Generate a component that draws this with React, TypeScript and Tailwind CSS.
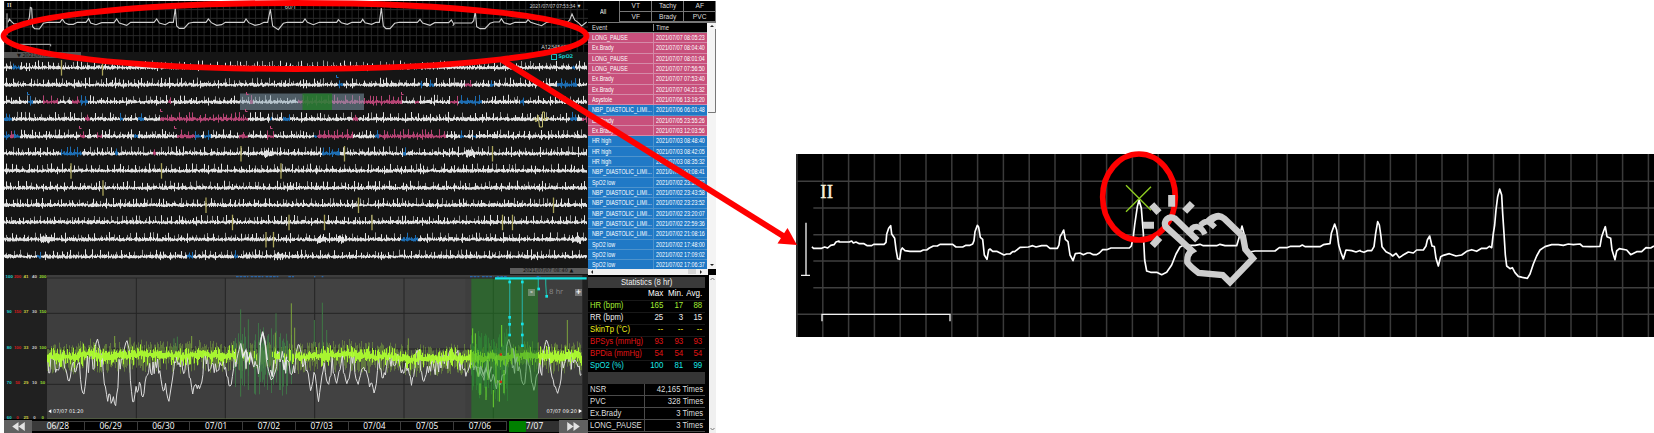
import React from "react";

type Seg = [number, number, string];

const PINK = "#c94a80";
const BLUE = "#1f78c4";
const WHITE = "#f2f2f2";

function makeRandom(seed: number) {
  let s = seed;
  return () => {
    s = (s * 1664525 + 1013904223) % 4294967296;
    return s / 4294967296;
  };
}

const STRIPS: { segs: Seg[]; marks: number[]; bursts?: number[] }[] = [
  { segs: [[12, 20, BLUE], [572, 575, BLUE]], marks: [61.5, 102.5] },
  { segs: [[338, 343, BLUE], [420, 423, BLUE], [429, 434, BLUE], [465, 472, PINK], [490, 494, BLUE], [557, 577, BLUE]], marks: [] },
  { segs: [[28, 33, BLUE], [43, 58, PINK], [72, 80, PINK], [80, 88, BLUE], [168, 171, PINK], [250, 253, PINK], [298, 402, PINK], [415, 419, PINK], [450, 458, PINK], [459, 482, BLUE], [520, 524, BLUE]], marks: [] },
  { segs: [[4, 12, BLUE], [85, 90, PINK], [120, 123, BLUE], [138, 144, BLUE], [160, 248, PINK], [270, 272, BLUE], [283, 290, BLUE], [353, 358, PINK], [570, 577, BLUE], [582, 588, PINK]], marks: [] },
  { segs: [[4, 10, BLUE], [10, 14, PINK], [14, 20, BLUE], [80, 85, PINK], [97, 102, PINK], [134, 138, BLUE], [177, 195, PINK], [195, 201, BLUE], [204, 211, BLUE], [239, 248, PINK], [267, 274, PINK], [314, 317, BLUE], [317, 353, PINK], [375, 379, BLUE], [379, 446, PINK], [460, 464, BLUE], [473, 476, BLUE]], marks: [] },
  { segs: [[61, 82, BLUE], [115, 118, BLUE], [153, 156, PINK], [322, 340, BLUE], [403, 406, BLUE]], marks: [241, 344.5, 492.5], bursts: [268, 470] },
  { segs: [], marks: [71, 161.5, 281] },
  { segs: [], marks: [103] },
  { segs: [], marks: [206, 358.5, 553.5] },
  { segs: [], marks: [232.5, 289, 324.5, 372, 502.5, 512.5] },
  { segs: [[401, 418, BLUE]], marks: [266, 273.5], bursts: [45, 321, 342, 576] },
  { segs: [[37, 41, BLUE], [187, 193, BLUE], [234, 238, BLUE]], marks: [], bursts: [278] },
];

const L_MARKS: [number, number, string][] = [
  [27, 95, BLUE], [246, 95, PINK], [160, 112, PINK], [245, 112, PINK],
  [79, 129, PINK], [174, 129, PINK], [270, 129, PINK], [336, 78, BLUE], [401, 95, PINK],
];

function StripWave({ index }: { index: number }) {
  const { segs, marks, bursts = [] } = STRIPS[index];
  const base = 67.6 + index * 17.18;
  const rnd = makeRandom(index * 97 + 11);
  const groups: Record<string, string> = {};
  const dim: string[] = [];
  let untilBeat = 3;
  for (let x = 4; x < 587; x += 1) {
    const seg = segs.find(([a, b]) => x >= a && x < b);
    const color = seg ? seg[2] : WHITE;
    let up = 0.5 + rnd() * 1.9;
    let down = 0.6 + rnd() * 1.5;
    if (bursts.some((b) => Math.abs(b - x) < 5)) {
      up += rnd() * 2.5;
      down += rnd() * 3;
    }
    untilBeat -= 1;
    if (untilBeat <= 0) {
      const h = 3.8 + rnd() * 3.5;
      if (color === WHITE && rnd() < 0.45) {
        dim.push(`M${x + 0.5} ${(base - h).toFixed(1)}V${base.toFixed(1)}`);
      } else {
        up = h;
        down = rnd() < 0.2 ? 3.5 : 2;
      }
      untilBeat = 3 + Math.floor(rnd() * 6);
    }
    groups[color] = (groups[color] || "") + `M${x + 0.5} ${(base - up).toFixed(1)}V${(base + down).toFixed(1)}`;
  }
  return (
    <g fill="none">
      <path d={dim.join("")} stroke="#949494" />
      {Object.entries(groups).map(([c, d]) => (
        <path key={c} d={d} stroke={c} strokeOpacity={c === WHITE ? 0.92 : 0.9} />
      ))}
      {marks.map((m) => (
        <path key={m} d={`M${m} ${base - 7.5}V${base + 8}`} stroke="#aaa45a" strokeWidth="1.3" />
      ))}
    </g>
  );
}

function LeadStrip() {
  const vertical: number[] = [];
  for (let x = 14; x < 1760; x += 19.3) vertical.push(x);
  return (
    <svg className="absolute inset-0 h-full w-full" viewBox="12 3 1752 153" preserveAspectRatio="none" fill="none">
      <path d={vertical.map((x) => `M${x} 3V156`).join("")} stroke="#242424" strokeWidth="3" />
      <path d="M12 29H1764M12 55H1764M12 81H1764M12 107H1764M12 133H1764" stroke="#2b2b2b" strokeWidth="3" />
      <path d="M21 40V105M60 133H152V139" stroke="#bbb" strokeWidth="3" />
      <path
        d="M24 67L28 57L34 64L42 72L60 70L84 66L88 52L91 22L95 24L98 80L104 86L118 87L130 70L145 67H180L187 57L194 68L205 73H220L232 67H258L266 56L272 69L288 74L305 68H342L350 57L358 69L380 76L392 67H462L470 57L478 69L496 74L508 67H520L526 24L530 78L538 85H552L566 70L580 67H618L625 57L634 68L650 76L665 74L676 67H732L738 57L746 68L765 76L780 73L792 67H803L811 28L818 78L835 89L850 70L862 67H908L915 57L922 67L940 74L958 67H1010L1015 59L1024 68L1042 73L1056 67H1082L1088 58L1095 68L1115 73L1128 67H1138L1144 24L1150 78L1158 86H1170L1184 70L1198 67H1252L1260 58L1268 69L1290 76L1304 68H1346L1354 60L1362 73L1358 77M1362 69H1415L1421 62L1426 34L1430 80L1440 86H1455L1470 70L1482 66H1498L1504 56L1512 68L1530 73L1545 67H1578L1584 59L1592 67L1608 72L1625 77L1640 67H1702L1709 60L1716 42L1724 60L1735 68L1745 78L1760 66"
        stroke="#cfcfcf"
        strokeWidth="3.3"
      />
    </svg>
  );
}

function buildTrend() {
  const rnd = makeRandom(4242);
  const dips = [205, 250, 322, 335, 345, 400, 412, 428, 492, 505, 512, 578, 590, 600, 690, 815, 900, 932, 955, 985, 1010, 1040, 1075, 1110, 1122, 1150, 1235, 1270, 1400, 1450, 1475, 1490, 1500, 1570, 1602, 1665, 1674, 1745];
  const depth = [60, 105, 120, 135, 145, 135, 90, 120, 95, 125, 80, 90, 85, 90, 80, 60, 50, 80, 115, 70, 60, 70, 75, 85, 95, 50, 65, 60, 40, 60, 60, 80, 70, 75, 90, 75, 105, 40];
  const lime: string[] = [];
  const fade: string[] = [];
  const dark: string[] = [];
  const white: string[] = [];
  let drift = 0;
  for (let x = 142.5; x < 1746; x += 3) {
    drift = drift * 0.9 + (rnd() - 0.5) * 5;
    const center = 288 + drift + (x > 1180 && x < 1560 ? 6 : 0);
    const wild = x > 702 && x < 885;
    const active = x > 1412 && x < 1525;
    if (!wild || rnd() < 0.3) {
      const reach = () => 5 + rnd() * rnd() * 30;
      lime.push(`M${x} ${(center - reach()).toFixed(0)}V${(center + reach()).toFixed(0)}`);
    }
    fade.push(`M${x} ${(center - 8 - rnd() * 36).toFixed(0)}V${(center + 8 + rnd() * 44).toFixed(0)}`);
    if (wild && rnd() < 0.65) {
      dark.push(`M${x} ${(250 - rnd() * 75 * (rnd() < 0.3 ? 1.1 : 0.4)).toFixed(0)}V${(325 + rnd() * 85).toFixed(0)}`);
    }
    if (active && rnd() < 0.7) {
      dark.push(`M${x} ${(265 - rnd() * 60).toFixed(0)}V${(340 + rnd() * 60 + (x > 1430 ? 25 : 0)).toFixed(0)}`);
    }
  }
  for (let x = 143; x < 1746; x += 3.4) {
    let y = 308 + Math.sin(x / 17) * 8 + (rnd() - 0.5) * 66;
    dips.forEach((d, i) => {
      const dist = Math.abs(x - d);
      if (dist < 11) y = Math.max(y, 305 + depth[i] * (1 - dist / 17) + (rnd() - 0.5) * 22);
    });
    [[292, 235], [380, 238], [788, 215], [722, 250], [896, 248], [1526, 235], [1640, 236]].forEach(([p, top]) => {
      if (Math.abs(x - p) < 9) y = top + Math.abs(x - p) * 4;
    });
    white.push(`${x.toFixed(1)},${y.toFixed(0)}`);
  }
  return { lime: lime.join(""), fade: fade.join(""), dark: dark.join(""), white: white.join(" ") };
}

const TREND = buildTrend();

function TrendChart() {
  return (
    <svg className="h-[144px] w-[541px] shrink-0" viewBox="141 45 1623 432" preserveAspectRatio="none" fill="none">
      <rect x="141" y="45" width="1606" height="432" fill="#3e3e3e" />
      <rect x="676" y="56" width="720" height="421" fill="#424242" />
      <path d="M141 54H1747M141 160H1747M141 267H1747M141 373H1747M409 54V478M676 54V478M944 54V478M1212 54V478M1480 54V478" stroke="#252525" strokeWidth="3" />
      <path d="M708 50H745M752 50H790M797 50H835M865 50H882M942 50H946M965 50H970M1410 50H1438M1446 50H1480M1490 50H1520M1610 50H1622" stroke="#2b66a8" strokeWidth="4" strokeDasharray="8 3" />
      <path d={TREND.fade} stroke="#86b83d" strokeWidth="2" strokeOpacity="0.7" />
      <path d={TREND.dark} stroke="#3f8549" strokeWidth="2.5" strokeOpacity="0.85" />
      <polyline points={TREND.white} stroke="#dedede" strokeWidth="3" />
      <path d={TREND.lime} stroke="#adff2f" strokeWidth="3" strokeOpacity="0.93" />
      <path d="M967 128V280M943 180V260M722 148V410M828 160V260M745 178V390M980 210V260M522 235V270M532 230V270" stroke="#3f7a45" strokeWidth="3" />
      <path d="M874 130V270M826 218V270M884 203V270M1702 180V270M344 228V262M575 228V264M390 232V266M1225 235V270" stroke="#8ab83c" strokeWidth="2.5" />
      <path d="M722 250L728 290L738 270L744 300L752 280L758 310M780 255L788 215L796 255L802 300M812 330L817 350L822 300M848 300L852 330L860 290M1428 320L1436 350L1442 318L1450 345L1458 325L1466 350L1474 320M1540 265L1546 310L1552 290" stroke="#e8e8e8" strokeWidth="4" />
      <rect x="1414" y="56" width="200" height="421" fill="#1f8a22" fillOpacity="0.5" />
      <path d="M1418 205V250M1426 220V300M1505 195V260M1440 370V405M1458 380V420M1480 390V442M1498 360V425M1512 330V400M1434 270V350M1464 275V360M1488 280V370" stroke="#6dd52f" strokeWidth="3" />
      <path d="M1529 56V225M1567 56V257M1615 56V87M1637 56V72L1640 109" stroke="#27a08c" strokeWidth="4" />
      <path d="M1485 55H1760" stroke="#14e6e6" strokeWidth="7" />
      {[[1529, 66], [1529, 172], [1529, 193], [1529, 225], [1567, 66], [1567, 192], [1567, 225], [1567, 257], [1616, 87], [1640, 109]].map(([x, y]) => (
        <rect key={`${x}-${y}`} x={x - 4} y={y - 4} width="8" height="8" fill="#14e6e6" />
      ))}
      <rect x="1499" y="280" width="7" height="7" fill="#d32b12" />
      <rect x="1499" y="362" width="7" height="7" fill="#d32b12" />
      <path d="M142 477H1747" stroke="#5e7442" strokeWidth="3" />
      <path d="M154 448V460L145 454ZM1736 447V460L1746 453Z" fill="#fff" />
    </svg>
  );
}

const AXIS = [
  ["100", "200", "41", "40", "200"],
  ["90", "150", "37", "30", "150"],
  ["80", "100", "33", "20", "100"],
  ["70", "50", "29", "10", "50"],
  ["60", "0", "25", "0", "0"],
];
const AXIS_COLORS = ["text-[#1fd0d0]", "text-[#d01c1c]", "text-[#cfcf40]", "text-[#c8c8c8]", "text-[#93d62f]"];

const D7 = "2021/07/07 ";
const NBP = "NBP_DIASTOLIC_LIMI...";
const EVENTS: [string, string, boolean][] = [
  ["LONG_PAUSE", D7 + "08:05:23", true],
  ["Ex.Brady", D7 + "08:04:40", true],
  ["LONG_PAUSE", D7 + "08:01:04", true],
  ["LONG_PAUSE", D7 + "07:56:50", true],
  ["Ex.Brady", D7 + "07:53:40", true],
  ["Ex.Brady", D7 + "04:21:32", true],
  ["Asystole", "2021/07/06 13:19:20", true],
  [NBP, "2021/07/06 06:01:48", false],
  ["Ex.Brady", "2021/07/05 23:55:26", true],
  ["Ex.Brady", "2021/07/03 12:03:56", true],
  ["HR high", "2021/07/03 08:48:40", false],
  ["HR high", "2021/07/03 08:42:05", false],
  ["HR high", "2021/07/03 08:35:32", false],
  [NBP, "2021/07/03 00:08:41", false],
  ["SpO2 low", "2021/07/02 23:53:32", false],
  [NBP, "2021/07/02 23:43:58", false],
  [NBP, "2021/07/02 23:23:52", false],
  [NBP, "2021/07/02 23:20:07", false],
  [NBP, "2021/07/02 22:59:36", false],
  [NBP, "2021/07/02 21:08:16", false],
  ["SpO2 low", "2021/07/02 17:48:00", false],
  ["SpO2 low", "2021/07/02 17:09:02", false],
  ["SpO2 low", "2021/07/02 17:06:37", false],
];

const STATS: [string, string, string, string, string][] = [
  ["HR (bpm)", "165", "17", "88", "text-[#a4ee33]"],
  ["RR (bpm)", "25", "3", "15", "text-[#efefef]"],
  ["SkinTp (°C)", "--", "--", "--", "text-[#f0f01a]"],
  ["BPSys (mmHg)", "93", "93", "93", "text-[#e01414]"],
  ["BPDia (mmHg)", "54", "54", "54", "text-[#e01414]"],
  ["SpO2 (%)", "100", "81", "99", "text-[#19e8e8]"],
];

const COUNTS: [string, string][] = [
  ["NSR", "42,165 Times"],
  ["PVC", "328 Times"],
  ["Ex.Brady", "3 Times"],
  ["LONG_PAUSE", "3 Times"],
];

const DAYS = ["06/28", "06/29", "06/30", "07/01", "07/02", "07/03", "07/04", "07/05", "07/06"];

function EventPanel() {
  return (
    <div className="flex h-[274px] flex-col bg-black text-[7.4px] leading-none text-white">
      <div className="flex h-[22px] shrink-0 border-b border-[#777]">
        <div className="flex w-[32px] items-center justify-center border-r border-[#777]">
          <span className="scale-x-75">All</span>
        </div>
        <div className="grid w-[97px] grid-cols-3 grid-rows-2">
          {["VT", "Tachy", "AF", "VF", "Brady", "PVC"].map((t) => (
            <div key={t} className="flex h-[10.5px] items-center justify-center overflow-hidden border-r border-b border-[#777] text-[#ddd]">
              <span className="scale-x-90">{t}</span>
            </div>
          ))}
        </div>
      </div>
      <div className="flex min-h-0 flex-1">
        <div className="flex w-[119px] flex-col overflow-hidden">
          <div className="flex h-[10px] shrink-0 items-center border-b border-[#888] text-[#ddd]">
            <div className="w-[66px] border-r border-[#888] pl-[4px]"><span className="inline-block origin-left scale-x-[.8]">Event</span></div>
            <div className="pl-[2px]"><span className="inline-block origin-left scale-x-[.8]">Time</span></div>
          </div>
          {EVENTS.map(([name, time, alarm], i) => (
            <div key={i} className={`flex h-[10.33px] shrink-0 items-center border-b ${alarm ? "border-[#d58aa8] bg-[#c8507c]" : "border-[#4d93cd] bg-[#2079c6]"}`}>
              <div className={`flex h-full w-[66px] shrink-0 items-center border-r pl-[4px] ${alarm ? "border-[#d58aa8]" : "border-[#4d93cd]"}`}>
                <span className="inline-block origin-left scale-x-[.72] whitespace-nowrap text-white">{name}</span>
              </div>
              <div className="w-[53px] pl-[2px]"><span className="inline-block origin-left scale-x-[.72] whitespace-nowrap text-white">{time}</span></div>
            </div>
          ))}
        </div>
        <div className="flex w-[9px] flex-col justify-between bg-[#f4f4f4]">
          <svg viewBox="0 0 9 90" className="h-[90px] w-[9px]"><path d="M3 4H7L5 2Z" fill="#222" /><path d="M1 89.5H8.5V6" stroke="#777" fill="none" /></svg>
          <svg viewBox="0 0 9 8" className="h-[8px] w-[9px]"><path d="M3 3H7L5 5Z" fill="#222" /></svg>
        </div>
      </div>
      <div className="flex h-[6px] w-[120px] shrink-0 items-center justify-between bg-[#f0f0f0] px-[2px]">
        <svg viewBox="0 0 4 4" className="size-[4px]"><path d="M3 0V4L1 2Z" fill="#222" /></svg>
        <svg viewBox="0 0 24 6" className="h-[6px] w-[24px]"><path d="M6 0H14V5H6Z" fill="#d5d5d5" /><path d="M18 1V5L20 3Z" fill="#222" /></svg>
      </div>
    </div>
  );
}

function StatsPanel() {
  return (
    <div className="flex h-[158px] bg-black text-[9.2px] leading-none text-[#dedede]">
      <div className="flex w-[117px] flex-col pt-[2px]">
        <div className="flex h-[11px] shrink-0 items-center justify-center bg-[#3a3a3a] text-[#f0f0f0]"><span className="scale-x-[.84] whitespace-nowrap">Statistics (8 hr)</span></div>
        <div className="flex h-[11.5px] shrink-0 items-center justify-end text-white">
          {["Max", "Min.", "Avg."].map((t) => (
            <div key={t} className="flex w-[19.5px] justify-end pr-[2.5px]"><span className="origin-right scale-x-[.88]">{t}</span></div>
          ))}
        </div>
        {STATS.map(([label, a, b, c, color]) => (
          <div key={label} className={`flex h-[12px] shrink-0 items-center border-t border-[#181818] ${color}`}>
            <div className="w-[58.5px] pl-[2px]"><span className="inline-block origin-left scale-x-[.84] whitespace-nowrap">{label}</span></div>
            {[a, b, c].map((v, i) => (
              <div key={i} className="flex w-[19.5px] justify-end pr-[2.5px]"><span className="origin-right scale-x-[.86]">{v}</span></div>
            ))}
          </div>
        ))}
        <div className="h-[12.5px] shrink-0 bg-[#353535]" />
        {COUNTS.map(([label, value]) => (
          <div key={label} className="flex h-[12px] shrink-0 items-center border-b border-[#4a4a4a]">
            <div className="flex h-full w-[57px] items-center border-r border-[#4a4a4a] pl-[2px]"><span className="origin-left scale-x-[.84] whitespace-nowrap">{label}</span></div>
            <div className="flex w-[60px] justify-end pr-[2px]"><span className="origin-right scale-x-[.84] whitespace-nowrap">{value}</span></div>
          </div>
        ))}
      </div>
      <div className="flex w-[11px] flex-col pl-[4px]">
        <div className="flex h-full w-[7px] flex-col justify-between bg-[#f0f0f0]">
          <svg viewBox="0 0 7 8" className="h-[8px] w-[7px]"><path d="M1.5 5L3.5 3L5.5 5" stroke="#777" fill="none" /></svg>
          <svg viewBox="0 0 7 8" className="h-[8px] w-[7px]"><path d="M1.5 3L3.5 5L5.5 3" stroke="#777" fill="none" /></svg>
        </div>
      </div>
    </div>
  );
}

function Monitor() {
  return (
    <div className="mt-px ml-[4px] flex h-[432px] w-[712px] overflow-hidden bg-[#151515] font-['Liberation_Sans',Arial,sans-serif]">
      <div className="flex w-[584px] flex-col">
        <div className="relative flex h-[51px] shrink-0 flex-col justify-between bg-black font-['Noto_Sans',sans-serif] text-[5.5px] leading-none text-[#d8d8d8]">
          <LeadStrip />
          <div className="relative flex justify-between pt-[2px] pr-[7px] pl-[3px]">
            <span className="font-['Liberation_Serif',serif] font-bold">II</span>
            <span className="pt-[2px] pl-[46px]">60/1</span>
            <span className="origin-right scale-x-90 pt-px tracking-[-0.1px]">2021/07/07 07:53:34 ▼</span>
          </div>
          <div className="relative pr-[15px] pb-[2px] text-right">A123456789</div>
        </div>
        <div className="relative h-[223px] shrink-0 text-[5.5px] leading-none">
          <svg className="absolute inset-0" width="584" height="223" viewBox="4 52 584 223">
            {STRIPS.map((_, i) => <StripWave key={i} index={i} />)}
            <rect x="240" y="93.5" width="124" height="16.5" fill="#8aa5b8" fillOpacity="0.5" />
            <rect x="302.5" y="93.5" width="29.5" height="16.5" fill="#1c7a22" fillOpacity="0.75" />
            <path d="M534 118L536 122L538 115L539.5 127H542.5V112H544.5V121L547 117L549 120" stroke="#c2bc6e" fill="none" />
            {L_MARKS.map(([x, y, c]) => <path key={`${x}-${y}`} d={`M${x + 0.5} ${y - 3}V${y - 0.5}H${x + 2.5}`} stroke={c} fill="none" />)}
          </svg>
          <div className="relative flex h-full flex-col justify-between">
            <div className="flex justify-between">
              <div className="flex h-[6px] w-[77px] items-center bg-[#555] pl-[13px] font-['DejaVu_Sans',sans-serif] text-[5px] text-[#111]">▼ 2021/07/04 01:20</div>
              <div className="flex items-center gap-[1.5px] pt-[2px] pr-[15px] font-['DejaVu_Sans',sans-serif] text-[5.2px] font-bold tracking-[-0.2px] text-[#16c4c4]">
                <span className="size-[6px] border border-[#16c4c4]" />SpO2
              </div>
            </div>
            <div className="flex justify-end pb-[1px]">
              <div className="flex h-[6.5px] w-[78px] items-center bg-[#5c5c5c] pl-[13px] font-['DejaVu_Sans',sans-serif] text-[5px] text-[#111]">2021/07/07 08:40 ▲</div>
            </div>
          </div>
        </div>
        <div className="relative flex h-[144px] shrink-0 bg-[#202020]">
          <div className="flex h-[145px] w-[43px] shrink-0 flex-col justify-between pl-px text-[4.4px] leading-[4px] font-bold">
            {AXIS.map((row, r) => (
              <div key={r} className="grid grid-cols-5">
                {row.map((v, c) => <span key={c} className={`text-center ${AXIS_COLORS[c]}`}>{v}</span>)}
              </div>
            ))}
          </div>
          <TrendChart />
          <div className="absolute inset-0 flex flex-col justify-between pt-[14px] pr-[6px] pb-[5px] pl-[49px] font-['DejaVu_Sans',sans-serif] leading-none">
            <div className="flex items-center justify-end text-[7px] text-[#858585]">
              <span className="mr-[14px] flex size-[7px] items-center justify-center bg-[#6c8c6c] text-[7px] font-bold text-[#e0e0e0]">-</span>
              <span>8 hr</span>
              <span className="ml-[12px] flex size-[7px] items-center justify-center bg-[#777] text-[7px] font-bold text-white">+</span>
            </div>
            <div className="flex justify-between pr-[5px] text-[5px] text-[#f2f2f2]"><span>07/07 01:20</span><span>07/07 09:20</span></div>
          </div>
        </div>
        <div className="flex h-[14px] shrink-0 items-center bg-black font-['Open_Sans',sans-serif] text-[8.4px] leading-none font-medium text-white">
          <div className="flex h-[13px] w-[28px] items-center justify-center bg-[#606060]">
            <svg viewBox="0 0 14 10" className="h-[9px] w-[13px]"><path d="M7 0V10L0 5ZM14 0V10L7 5Z" fill="#e2e2e2" /></svg>
          </div>
          {DAYS.map((d, i) => (
            <div key={d} className={`flex h-[10px] w-[52.75px] items-center justify-center border-y border-r border-[#3c3c3c] ${i === 0 ? "bg-gradient-to-r from-[#3a3a3a] from-55% to-black to-55%" : ""}`}>{d}</div>
          ))}
          <div className="flex h-[11px] w-[52px] items-center">
            <span className="ml-[2px] h-full w-[17px] bg-[#008000]" />
            <span className="flex h-full flex-1 items-center bg-[#303030]">7/07</span>
          </div>
          <div className="flex h-[13px] flex-1 items-center justify-center bg-[#606060]">
            <svg viewBox="0 0 14 10" className="h-[9px] w-[13px]"><path d="M0 0V10L7 5ZM7 0V10L14 5Z" fill="#e2e2e2" /></svg>
          </div>
        </div>
      </div>
      <div className="flex w-[128px] flex-col overflow-hidden">
        <EventPanel />
        <StatsPanel />
      </div>
    </div>
  );
}

function DetailView() {
  const vertical = Array.from({ length: 34 }, (_, i) => 21 + i * 77.4);
  return (
    <svg className="mt-[154px] h-[183px] w-[858px] bg-black" viewBox="18 12 2574 549" fill="none">
      <path d={vertical.map((x) => `M${x} 12V561`).join("")} stroke="#3a3a3a" strokeWidth="4.5" />
      <path d="M20 94H2592M70 174H2592M70 254H2592M70 333H2592M70 413H2592M20 493H2592" stroke="#3f3f3f" strokeWidth="4.5" />
      <text x="91" y="143" fontSize="54" textLength="38" lengthAdjust="spacingAndGlyphs" fill="#f8f0da" stroke="#f8f0da" strokeWidth="1" fontFamily="Liberation Serif, serif">II</text>
      <path d="M48 218V376M33 376H60M96 514V493H480V514" stroke="#f0f0f0" strokeWidth="4" />
      <g stroke="#fff" strokeWidth="5" strokeLinejoin="round">
        <path d="M66 290L70 295H95L104 291L113 294L122 286L132 284L138 276L147 273V276H178L185 273L190 279L198 276L208 281H222L232 287H245L251 283H282L288 277L290 253L296 235L302 227L305 252L314 265L318 298L323 326L329 328L333 300L337 294L345 302L360 304H392L400 300H410L418 294L430 288H442L450 283H488L498 291H518L528 286H540L548 282L552 272L555 245L562 226L566 232L571 262L578 268L583 315L591 328L596 300L600 297L608 304H620L632 310L642 315L650 312H660L668 305H674L690 292L715 291L728 287L738 291L755 287H770L780 295H802L807 285L810 260L816 250L821 240L826 268L834 275L840 315L849 332L856 311L870 309L880 314L892 309H900L910 314H920L928 309L938 299H950L963 294H1018L1024 288L1030 260L1034 225L1042 170L1047 150L1054 175L1060 250L1064 330L1070 363L1082 367H1100L1115 374L1130 367L1145 345L1158 312L1170 291L1180 286H1215L1230 283L1240 287H1280L1290 283L1305 287H1340L1348 260L1356 228L1363 255L1370 300L1378 306L1395 303H1455L1468 293H1490L1502 289H1530L1537 285L1545 290H1590L1600 284L1620 281L1624 250L1634 222L1640 240L1646 285L1653 308L1660 327L1668 300L1685 302L1698 306L1712 301" />
        <g transform="translate(1710 0)">
          <path d="M0 303L12 307L22 302H35L42 290L47 250L53 215L58 225L63 260L66 290L78 305L90 311L98 318L108 310L118 323L128 316L145 306L160 309L170 300H190L198 288L202 270L209 258L216 288L223 290L228 325L235 348L242 320L250 316L268 311L288 318L305 315L320 304L335 299L350 304L365 295H380L388 289L395 293L400 250L404 225L408 180L413 140L419 117L425 135L428 190L432 250L436 315L440 348L450 356L457 353L465 368L475 379L487 382L502 385L510 372L520 342L530 318L540 300L555 290L575 284H595L610 286L625 282L640 284L660 282L668 289L690 290L720 289L725 260L732 240L736 230L741 260L752 265L756 300L765 329L770 303L778 296L800 300L812 314L830 305H845L858 293L872 294L882 288" />
        </g>
      </g>
    </svg>
  );
}

function Annotations() {
  return (
    <svg className="pointer-events-none absolute inset-0" width="1654" height="433" viewBox="0 0 1654 433" fill="none">
      <ellipse cx="295" cy="36" rx="291.5" ry="33" stroke="#f00" strokeWidth="5.8" />
      <path d="M502 60L788 239" stroke="#f00" strokeWidth="5.8" />
      <path d="M797 245L777.5 243.5L787.5 228Z" fill="#f00" />
      <g transform="translate(1080 150) scale(.33333)">
        <path d="M138 106L213 181M213 110L138 185" stroke="#8fce22" strokeWidth="4" />
        <ellipse cx="177" cy="141" rx="109" ry="129" stroke="#f00" strokeWidth="17" />
        <g stroke="#cdcdcd" strokeWidth="19">
          <path d="M352 271L284 205A19 19 0 0 0 257 230L336 302Q320 312 322 337Q328 348 356 369L428 375L450 397L519 325L496 298L489 260L433 206Q415 190 398 207L390 213" />
          <path d="M330 250Q333 230 350 230Q365 232 375 253M361 226Q375 212 386 216Q394 221 405 232M384 212Q400 195 420 200" strokeWidth="17" />
          <path d="M275 135V170M337 160L314 184M215 164L237 188M189 226H222M239 263L217 287" strokeWidth="21" />
        </g>
      </g>
    </svg>
  );
}

export default function App() {
  return (
    <main className="relative flex h-[433px] w-[1654px] items-start justify-between overflow-hidden bg-white">
      <Monitor />
      <DetailView />
      <Annotations />
    </main>
  );
}
